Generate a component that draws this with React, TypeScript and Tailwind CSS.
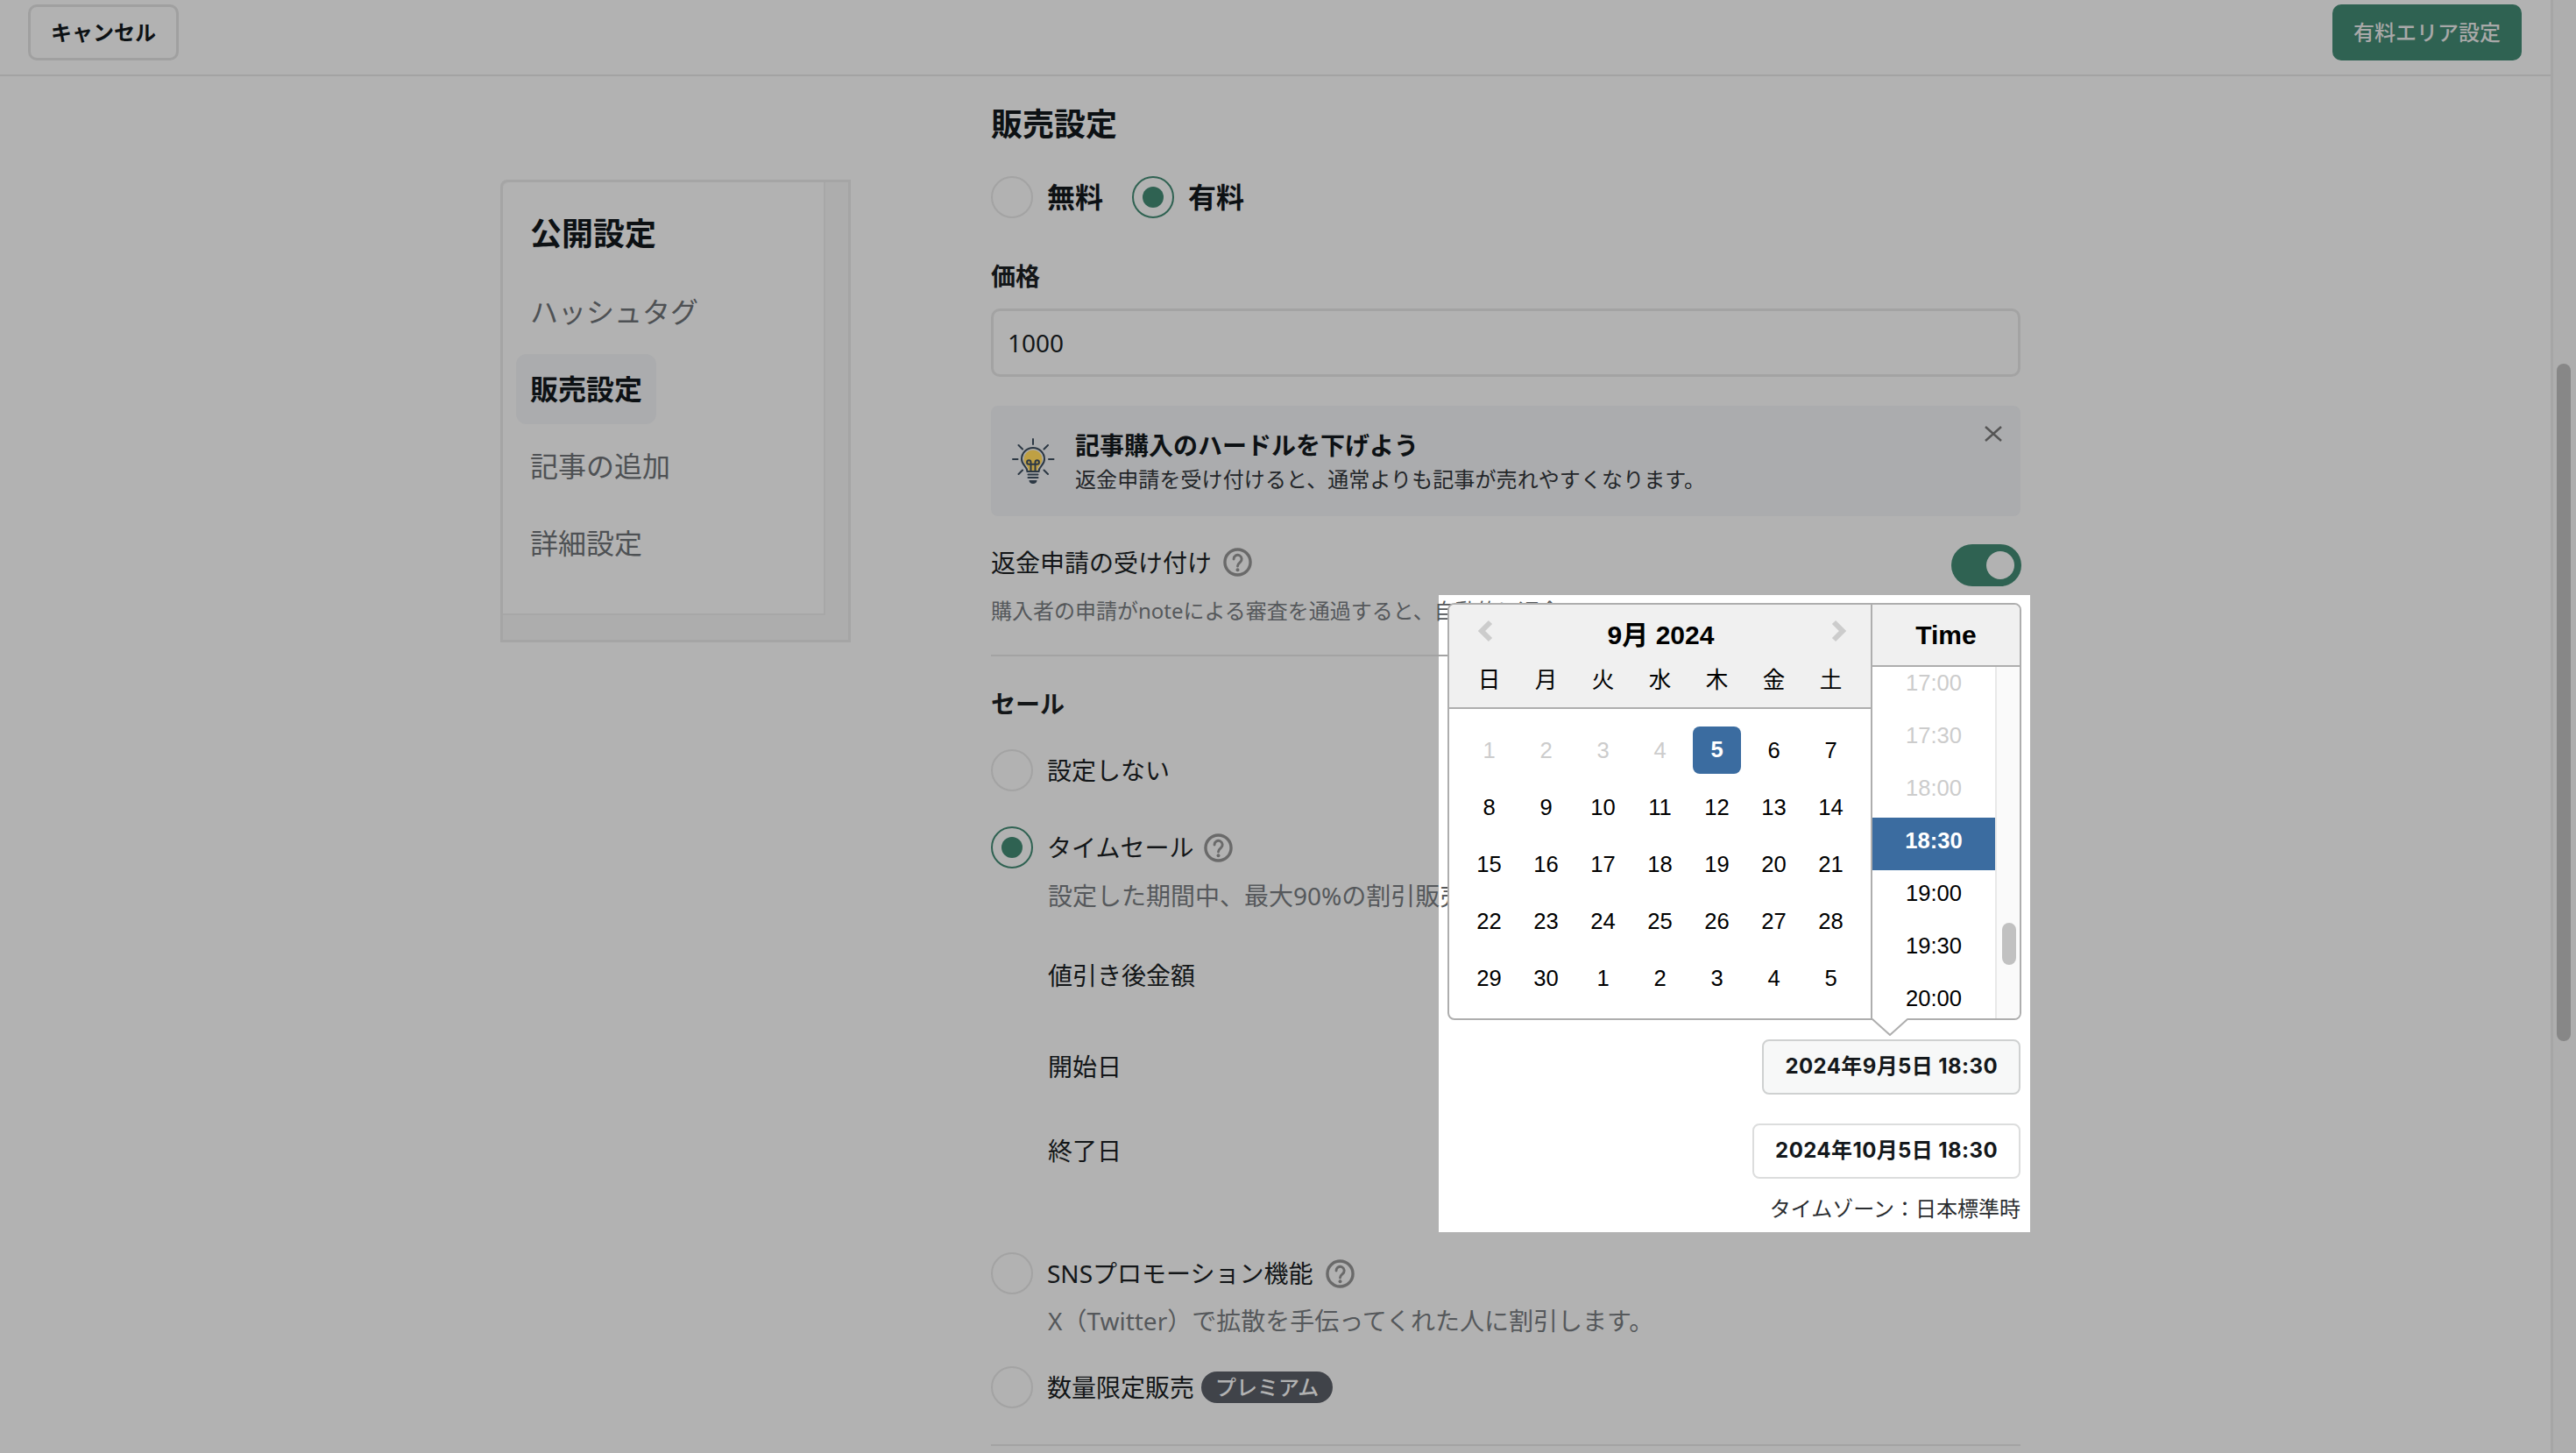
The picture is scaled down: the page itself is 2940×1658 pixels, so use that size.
import type { ReactNode } from 'react';

const sans = "font-['Noto_Sans','Noto_Sans_CJK_JP',sans-serif]";

function Radio({ checked = false }: { checked?: boolean }) {
  return (
    <span
      className={`flex h-12 w-12 shrink-0 items-center justify-center rounded-full border-2 ${
        checked ? 'border-[#2f6252]' : 'border-[#a3a3a3]'
      }`}
    >
      {checked && <span className="h-6 w-6 rounded-full bg-[#2f6252]" />}
    </span>
  );
}

function Help({ size = 33 }: { size?: number }) {
  return (
    <svg width={size} height={size} viewBox="0 0 34 34" fill="none" className="shrink-0">
      <circle cx="17" cy="17" r="15" stroke="#6a6a6a" strokeWidth="3.500" />
      <path
        d="M12.4 13.4a4.7 4.7 0 1 1 7.6 3.6c-1.9 1.5-3 2.3-3 4.6"
        stroke="#6a6a6a"
        strokeWidth="3"
        strokeLinecap="round"
      />
      <circle cx="17" cy="26" r="2" fill="#6a6a6a" />
    </svg>
  );
}

function Bulb() {
  return (
    <svg width="70" height="70" viewBox="0 0 70 70" fill="none" className="shrink-0">
      <path
        d="M23.500 33a10.500 10.500 0 0 1 21 0c0 6-5 7-5.500 13H29c-.5-6-5.500-7-5.500-13z"
        fill="#bfa044"
      />
      <g stroke="#2c3844" strokeWidth="2" strokeLinecap="round">
        <path d="M34 10v6M17.500 17l4.500 4.500M51 17l-4.500 4.500M11 33h5.500M52 33h5.500M17.500 50l4.500-4.500M51 50l-4.500-4.500" />
        <path d="M27.500 47c0-6-6.500-7-6.500-14a13 13 0 0 1 26 0c0 7-6.500 8-6.500 14z" />
        <path d="M31.500 47V36.500a2.200 2.200 0 1 0-2.200 2.200h9.400a2.200 2.200 0 1 0-2.200-2.200V47" />
        <path d="M28.500 50.500h11M28.500 54h11" />
      </g>
      <path d="M29.500 57h9c0 2.500-2 4-4.500 4s-4.500-1.500-4.500-4z" fill="#2c3844" />
    </svg>
  );
}

function Chevron({ dir }: { dir: 'left' | 'right' }) {
  return (
    <svg width="18" height="26" viewBox="0 0 18 26" fill="none" className="-mt-[9px]">
      <polyline
        points={dir === 'left' ? '15,3 5,13 15,23' : '3,3 13,13 3,23'}
        stroke="#cccccc"
        strokeWidth="6"
      />
    </svg>
  );
}

function Label({ children, className = '' }: { children: ReactNode; className?: string }) {
  return (
    <div className={`flex h-10 items-center whitespace-nowrap text-[28px] text-[#131618] ${className}`}>
      {children}
    </div>
  );
}

function Sub({ children, className = '' }: { children: ReactNode; className?: string }) {
  return <div className={`flex h-10 items-center whitespace-nowrap text-[28px] text-[#55585b] ${className}`}>{children}</div>;
}

function DateButton({ children, active = false }: { children: ReactNode; active?: boolean }) {
  return (
    <div
      className={`flex h-[63px] shrink-0 items-center rounded-lg border-2 px-6 font-['Inter','Noto_Sans_CJK_JP',sans-serif] text-[24px] font-bold tracking-[0.4px] text-[#14181b] ${
        active ? 'border-[#cfd1d1] bg-[#f7f8f8]' : 'border-[#dcdddd] bg-white'
      }`}
    >
      {children}
    </div>
  );
}

const dayNames = ['日', '月', '火', '水', '木', '金', '土'];
const prevDays = [1, 2, 3, 4];
const days = [5, 6, 7, 8, 9, 10, 11, 12, 13, 14, 15, 16, 17, 18, 19, 20, 21, 22, 23, 24, 25, 26, 27, 28, 29, 30, 1, 2, 3, 4, 5];
const times = [
  { t: '17:00', off: true },
  { t: '17:30', off: true },
  { t: '18:00', off: true },
  { t: '18:30', sel: true },
  { t: '19:00' },
  { t: '19:30' },
  { t: '20:00' },
];

function DatePopup() {
  return (
    <div className="absolute left-[1652px] top-[688px] z-20 font-['Liberation_Sans','Noto_Sans_CJK_JP',sans-serif] text-black">
      <div className="flex h-[476px] w-[655px] overflow-hidden rounded-lg border-2 border-[#aeaeae] bg-white">
        <div className="w-[483px] border-r-2 border-[#aeaeae]">
          <div className="border-b-2 border-[#aeaeae] bg-[#f0f0f0] pb-[13px]">
            <div className="flex h-[68px] items-center justify-between pl-8 pr-[27px]">
              <Chevron dir="left" />
              <span className="-ml-[3px] text-[30px] font-bold">9月 2024</span>
              <Chevron dir="right" />
            </div>
            <div className="mx-auto mt-[2px] grid h-[34px] w-[455px] grid-cols-7 items-center text-center text-[25.6px] leading-none">
              {dayNames.map((d) => (
                <span key={d}>{d}</span>
              ))}
            </div>
          </div>
          <div className="mx-auto mt-[15px] grid w-[455px] grid-cols-7 auto-rows-[65px] text-[25.6px]">
            {prevDays.map((d) => (
              <div key={d} className="flex items-center justify-center text-[#cccccc]">
                {d}
              </div>
            ))}
            {days.map((d, i) => (
              <div key={i} className="flex items-center justify-center">
                {i === 0 ? (
                  <span className="-mt-[2px] flex h-[54px] w-[55px] items-center justify-center rounded-lg bg-[#3b6ca0] font-bold text-white">
                    {d}
                  </span>
                ) : (
                  d
                )}
              </div>
            ))}
          </div>
        </div>
        <div className="flex-1">
          <div className="flex h-[71px] items-center justify-center border-b-2 border-[#aeaeae] bg-[#f0f0f0] text-[30px] font-bold">
            Time
          </div>
          <div className="flex h-[405px] overflow-hidden">
            <div className="-mt-2 w-[140px] text-[25.6px]">
              {times.map((r) => (
                <div
                  key={r.t}
                  className={`flex h-[60px] items-center justify-center pb-2 ${r.off ? 'text-[#cccccc]' : ''} ${
                    r.sel ? 'bg-[#3b6ca0] font-bold text-white' : ''
                  }`}
                >
                  {r.t}
                </div>
              ))}
            </div>
            <div className="flex-1 border-l-2 border-[#e8e8e8] bg-[#fafafa] pl-[6px] pt-[292px]">
              <div className="h-12 w-4 rounded-full bg-[#c1c1c1]" />
            </div>
          </div>
        </div>
      </div>
      <svg width="42" height="20" viewBox="0 0 42 20" className="absolute left-[484px] top-[474px]">
        <polygon points="1,0 21,19 41,0" fill="white" />
        <polyline points="1,1 21,19 41,1" fill="none" stroke="#aeaeae" strokeWidth="2" />
      </svg>
    </div>
  );
}

function Sidebar() {
  return (
    <aside className="ml-[571px] mt-[118px] h-[528px] w-[400px] shrink-0 rounded-tl-lg border-[3px] border-[#a5a5a5] bg-[#adadad]">
      <div className="h-[494px] w-[368px] rounded-tl-lg border-b-2 border-r-2 border-[#a7a7a7] bg-[#b2b2b2] pt-[35px]">
        <div className="ml-[31px] flex h-12 items-center text-[36px] font-bold text-[#0d1114]">公開設定</div>
        <div className="ml-[15px] mt-[25px] flex flex-col items-start gap-2 text-[32px] text-[#4e5154]">
          <div className="flex h-20 items-center px-4">ハッシュタグ</div>
          <div className="flex h-20 items-center rounded-xl bg-[#abacae] px-4 font-bold text-[#0d1114]">販売設定</div>
          <div className="flex h-20 items-center px-4">記事の追加</div>
          <div className="flex h-20 items-center px-4">詳細設定</div>
        </div>
      </div>
    </aside>
  );
}

export default function App() {
  return (
    <div className={`relative flex h-[1658px] w-[2940px] overflow-hidden bg-[#b2b2b2] ${sans}`}>
      {/* the bright patch behind the opened date picker */}
      <div className="absolute left-[1642px] top-[679px] z-0 h-[727px] w-[675px] bg-white" />

      <div className="relative z-10 min-w-0 flex-1">
        <header className="flex h-[87px] items-start justify-between border-b-2 border-[#a3a3a3] pl-8 pr-[33px] pt-[5px]">
          <button className="h-[64px] w-[172px] rounded-[10px] border-[3px] border-[#a0a0a0] text-[24px] font-bold text-[#0d1114]">
            キャンセル
          </button>
          <button className="h-[64px] w-[216px] rounded-[10px] bg-[#2f6252] text-[24px] font-medium text-[#a8a8a8]">
            有料エリア設定
          </button>
        </header>

        <div className="flex">
          <Sidebar />
          <main className="ml-[160px] w-[1175px] pt-[31px]">
            <h2 className="flex h-12 items-center text-[36px] font-bold text-[#0d1114]">販売設定</h2>

            <div className="mt-[35px] flex gap-[33px]">
              <div className="flex items-center gap-4">
                <Radio />
                <span className="text-[32px] font-bold text-[#0d1114]">無料</span>
              </div>
              <div className="flex items-center gap-4">
                <Radio checked />
                <span className="text-[32px] font-bold text-[#0d1114]">有料</span>
              </div>
            </div>

            <Label className="mt-[46px] font-bold">価格</Label>
            <div className="mt-[17px] flex h-[78px] items-center rounded-[10px] border-[3px] border-[#a3a3a3] px-4 text-[28px] text-[#131618]">
              1000
            </div>

            <div className="mt-[33px] flex h-[126px] items-center rounded-lg bg-[#abacae] pl-[14px]">
              <Bulb />
              <div className="ml-3 flex flex-col gap-[5px]">
                <div className="flex h-9 items-center text-[28px] font-bold text-[#0d1114]">記事購入のハードルを下げよう</div>
                <div className="flex h-8 items-center text-[24px] tracking-[0.1px] text-[#232629]">
                  返金申請を受け付けると、通常よりも記事が売れやすくなります。
                </div>
              </div>
              <svg width="20" height="18" viewBox="0 0 20 18" className="ml-auto mr-[21px] mt-[23px] self-start">
                <path d="M1 1l18 16M19 1L1 17" stroke="#555555" strokeWidth="2.400" />
              </svg>
            </div>

            <div className="mt-8 flex h-12 items-center justify-between">
              <div className="-mt-[7px] flex items-center gap-[13px] text-[28px] text-[#131618]">
                返金申請の受け付け
                <Help />
              </div>
              <span className="-mr-px flex h-12 w-20 items-center justify-end rounded-full bg-[#2f6252] pr-2">
                <span className="h-8 w-8 rounded-full bg-[#b2b2b2]" />
              </span>
            </div>
            <div className="mt-3 flex h-8 items-center whitespace-nowrap text-[24px] text-[#55585b]">
              購入者の申請がnoteによる審査を通過すると、自動的に返金
            </div>
            <div className="mt-[34px] h-[2px] w-full bg-[#a3a3a3]" />

            <Label className="mt-[34px] font-bold">セール</Label>
            <div className="mt-8 flex items-center gap-4">
              <Radio />
              <span className="text-[28px] text-[#131618]">設定しない</span>
            </div>
            <div className="mt-10 flex items-center gap-4">
              <Radio checked />
              <span className="flex items-center gap-3 text-[28px] text-[#131618]">
                タイムセール
                <Help />
              </span>
            </div>
            <div className="ml-[65px]">
              <Sub className="mt-[11px]">設定した期間中、最大90%の割引販売</Sub>
              <Label className="mt-[51px]">値引き後金額</Label>
              <Label className="mt-16 justify-between">
                開始日
                <DateButton active>2024年9月5日 18:30</DateButton>
              </Label>
              <Label className="mt-14 justify-between">
                終了日
                <DateButton>2024年10月5日 18:30</DateButton>
              </Label>
              <div className="mt-[26px] flex h-10 items-center justify-end text-[24px] text-[#2a2d30]">
                タイムゾーン：日本標準時
              </div>
            </div>

            <div className="mt-[30px] flex items-center gap-4">
              <Radio />
              <span className="flex items-center gap-[15px] text-[28px] text-[#131618]">
                SNSプロモーション機能
                <Help />
              </span>
            </div>
            <Sub className="ml-[65px] mt-[10px]">X（Twitter）で拡散を手伝ってくれた人に割引します。</Sub>
            <div className="mt-8 flex items-center gap-4">
              <Radio />
              <span className="text-[28px] text-[#131618]">数量限定販売</span>
              <span className="-ml-2 flex h-9 items-center rounded-full bg-[#404349] px-4 text-[24px] font-medium text-[#b2b2b2]">
                プレミアム
              </span>
            </div>
            <div className="mt-[41px] h-[2px] w-full bg-[#a3a3a3]" />
          </main>
        </div>
      </div>

      <div className="relative z-10 w-[29px] shrink-0 border-l-[3px] border-[#a6a6a6] bg-[#aeaeae] pl-[4px] pt-[415px]">
        <div className="h-[773px] w-4 rounded-full bg-[#878787]" />
      </div>

      <DatePopup />
    </div>
  );
}
